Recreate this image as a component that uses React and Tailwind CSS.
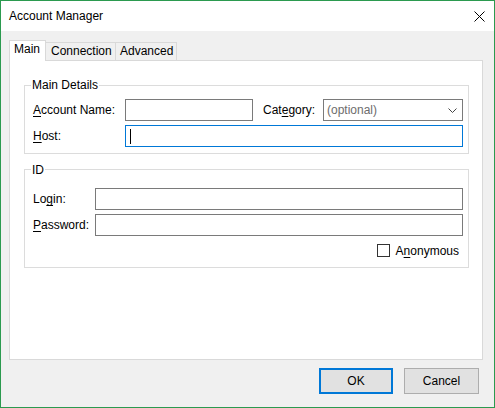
import React from 'react'

const U = ({ children }) => <span className="underline underline-offset-[2px]">{children}</span>

function Group({ title, titleMt, children, className }) {
  return (
    <div className={`w-[445px] border border-[#dcdcdc] ${className || ''}`}>
      <span className={`block w-fit ml-[6px] px-[1px] bg-white leading-[14px] ${titleMt}`}>{title}</span>
      {children}
    </div>
  )
}

function Field({ className }) {
  return <div className={`h-[22px] border border-[#7a7a7a] bg-white ${className}`} />
}

export default function App() {
  return (
    <div className="w-[495px] h-[408px] border border-[#2b9a4f] flex flex-col text-[12px] leading-[14px] text-black font-['Liberation_Sans',Arial,sans-serif]">
      {/* Title bar */}
      <div className="h-[30px] shrink-0 bg-white flex items-center pl-[8px]">
        <span>Account Manager</span>
        <svg className="ml-auto mr-[9px]" width="11" height="11" viewBox="0 0 11 11">
          <path d="M0.5 0.5 L10.5 10.5 M10.5 0.5 L0.5 10.5" stroke="#000" strokeWidth="1" fill="none" />
        </svg>
      </div>

      {/* Body */}
      <div className="flex-1 bg-[#f0f0f0] flex flex-col pl-[8px] pt-[9px]">
        {/* Tabs */}
        <div className="h-[20px] flex items-end">
          <div className="relative z-10 w-[37px] h-[21px] -mb-px bg-white border border-b-0 border-[#d9d9d9] pl-[4px] pt-[1px]">Main</div>
          <div className="w-[71px] h-[18px] -ml-px border border-b-0 border-[#d9d9d9] pl-[5px] pt-[1px]">Connection</div>
          <div className="w-[62px] h-[18px] -ml-px border border-b-0 border-[#d9d9d9] pl-[4px] pt-[1px]">Advanced</div>
        </div>

        {/* Panel */}
        <div className="w-[474px] h-[300px] bg-white border border-[#d9d9d9] pl-[14px] pt-[24px]">
          <Group title="Main Details" titleMt="-mt-[8px]" className="pb-[6px]">
            <div className="mt-[7px] pl-[8px]">
              <div className="h-[22px] flex items-center">
                <span className="w-[92px]"><U>A</U>ccount Name:</span>
                <Field className="w-[128px]" />
                <span className="ml-[10px] w-[60px]">Cat<U>e</U>gory:</span>
                <div className="w-[140px] h-[22px] border border-[#7a7a7a] bg-white flex items-center pl-[3px] pr-[5px] text-[#6d6d6d]">
                  <span>(optional)</span>
                  <svg className="ml-auto" width="9" height="5" viewBox="0 0 9 5">
                    <polyline points="0.5,0.5 4.5,4.5 8.5,0.5" stroke="#444" strokeWidth="1" fill="none" />
                  </svg>
                </div>
              </div>
              <div className="mt-[4px] h-[22px] flex items-center">
                <span className="w-[92px]"><U>H</U>ost:</span>
                <div className="w-[338px] h-[22px] border border-[#0078d7] bg-white flex items-center pl-[4px]">
                  <div className="w-px h-[15px] bg-black" />
                </div>
              </div>
            </div>
          </Group>

          <Group title="ID" titleMt="-mt-[7px]" className="mt-[15px] pb-[10px]">
            <div className="mt-[11px] pl-[8px] pr-[5px]">
              <div className="h-[22px] flex items-center">
                <span className="w-[62px]">Lo<U>g</U>in:</span>
                <Field className="w-[368px]" />
              </div>
              <div className="mt-[4px] h-[22px] flex items-center">
                <span className="w-[62px]"><U>P</U>assword:</span>
                <Field className="w-[368px]" />
              </div>
              <div className="mt-[8px] h-[13px] flex items-center justify-end">
                <div className="w-[13px] h-[13px] border border-[#333] bg-white" />
                <span className="ml-[6px] mr-[4px]">A<U>n</U>onymous</span>
              </div>
            </div>
          </Group>
        </div>

        {/* Buttons */}
        <div className="mt-[8px] flex justify-end pr-[15px]">
          <button className="w-[74px] h-[26px] bg-[#e1e1e1] border-2 border-[#0078d7] flex items-center justify-center">OK</button>
          <button className="ml-[11px] w-[75px] h-[26px] bg-[#e1e1e1] border border-[#adadad] flex items-center justify-center">Cancel</button>
        </div>
      </div>
    </div>
  )
}
